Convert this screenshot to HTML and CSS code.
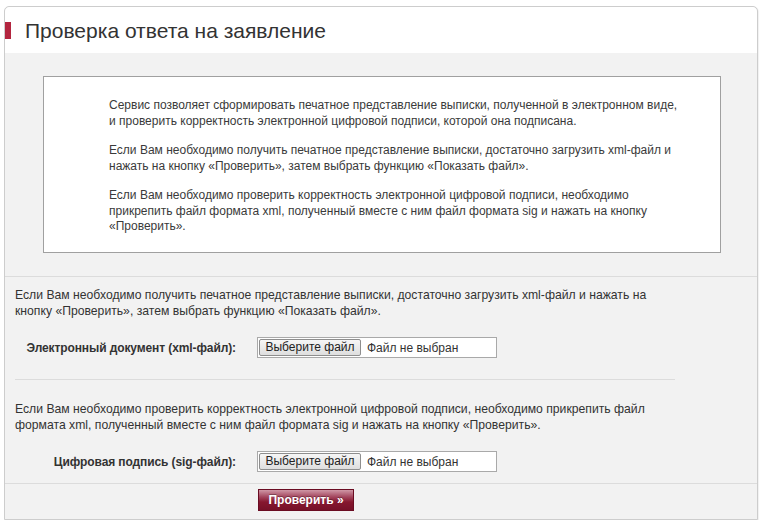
FILE: index.html
```html
<!DOCTYPE html>
<html lang="ru">
<head>
<meta charset="utf-8">
<title>Проверка ответа на заявление</title>
<link rel="stylesheet" href="styles.css">
</head>
<body>
<div class="panel">
  <div class="header">
    <span class="marker"></span>
    <h1 class="title">Проверка ответа на заявление</h1>
  </div>
  <div class="info-wrap">
    <div class="info">
      <p>Сервис позволяет сформировать печатное представление выписки, полученной в электронном виде,<br>и проверить корректность электронной цифровой подписи, которой она подписана.</p>
      <p>Если Вам необходимо получить печатное представление выписки, достаточно загрузить xml-файл и<br>нажать на кнопку «Проверить», затем выбрать функцию «Показать файл».</p>
      <p>Если Вам необходимо проверить корректность электронной цифровой подписи, необходимо<br>прикрепить файл формата xml, полученный вместе с ним файл формата sig и нажать на кнопку<br>«Проверить».</p>
    </div>
  </div>
  <div class="section">
    <p class="hint">Если Вам необходимо получить печатное представление выписки, достаточно загрузить xml-файл и нажать на<br>кнопку «Проверить», затем выбрать функцию «Показать файл».</p>
    <div class="field">
      <span class="label">Электронный документ (xml-файл):</span>
      <span class="file"><span class="file-btn">Выберите файл</span><span class="file-name">Файл не выбран</span></span>
    </div>
    <div class="divider"></div>
    <p class="hint">Если Вам необходимо проверить корректность электронной цифровой подписи, необходимо прикрепить файл<br>формата xml, полученный вместе с ним файл формата sig и нажать на кнопку «Проверить».</p>
    <div class="field">
      <span class="label">Цифровая подпись (sig-файл):</span>
      <span class="file"><span class="file-btn">Выберите файл</span><span class="file-name">Файл не выбран</span></span>
    </div>
  </div>
  <div class="actions">
    <button class="submit" type="button">Проверить »</button>
  </div>
</div>
</body>
</html>
```
FILE: styles.css
```css
html, body {
  margin: 0;
  padding: 0;
  background: #fff;
}
body {
  padding: 6px 0 0 4px;
  font-family: "Liberation Sans", Arial, sans-serif;
  font-size: 12px;
  color: #333;
}
.panel {
  width: 752px;
  border: 1px solid #cdcdcd;
  border-radius: 5px 5px 0 0;
  background: #f2f2f2;
  box-shadow: 1px 1px 1px rgba(0,0,0,0.06);
}
.header {
  height: 46px;
  background: #fff;
  border-radius: 5px 5px 0 0;
  display: flex;
  align-items: center;
}
.marker {
  width: 6px;
  height: 17px;
  background: #b3253f;
  margin-right: 14px;
  margin-top: 1px;
}
.title {
  margin: 0;
  font-size: 21px;
  font-weight: normal;
  color: #333;
  line-height: 24px;
  margin-top: 1px;
}
.info-wrap {
  padding: 23px 36px 23px 38px;
  border-bottom: 1px solid #dcdcdc;
}
.info {
  background: #fff;
  border: 1px solid #a0a0a0;
  height: 175px;
  box-sizing: content-box;
  padding: 0 0 0 65px;
}
.info p {
  margin: 14px 0 0;
  line-height: 15.5px;
  color: #3a3a3a;
}
.info p:first-child {
  margin-top: 21px;
}
.section {
  padding: 11px 0 0 10px;
  border-bottom: 1px solid #dcdcdc;
}
.hint {
  margin: 0;
  line-height: 15.5px;
  font-size: 12.2px;
  color: #333;
}
.field {
  display: flex;
  align-items: center;
  margin-top: 18px;
  margin-left: -10px;
}
.label {
  width: 231px;
  text-align: right;
  font-weight: bold;
  color: #333;
  margin-right: 21px;
  letter-spacing: -0.1px;
}
.file {
  display: inline-flex;
  align-items: center;
  width: 238px;
  height: 19px;
  background: #fff;
  border: 1px solid #a9a9a9;
}
.file-btn {
  margin-left: 1px;
  height: 15px;
  width: 100px;
  text-align: center;
  line-height: 15px;
  border: 1px solid #8e8e8e;
  border-radius: 2px;
  background: linear-gradient(#f6f6f6, #dedede);
  color: #222;
  font-size: 12px;
}
.file-name {
  padding-left: 6px;
  color: #333;
}
.divider {
  margin: 21px 82px 22px 0;
  border-top: 1px solid #dcdcdc;
  height: 0;
}
.section .field:last-child {
  margin-bottom: 11px;
}
.actions {
  padding: 5px 0 8px 253px;
}
.submit {
  display: block;
  width: 96px;
  height: 22px;
  padding: 0;
  border: 1px solid #6a0c22;
  background: linear-gradient(#cf97a6 0%, #a3455d 35%, #86172f 60%, #761028 100%);
  color: #fff;
  font-family: "Liberation Sans", Arial, sans-serif;
  font-weight: bold;
  font-size: 12px;
  text-shadow: 0 -1px 0 rgba(0,0,0,0.3);
  cursor: pointer;
}
```
